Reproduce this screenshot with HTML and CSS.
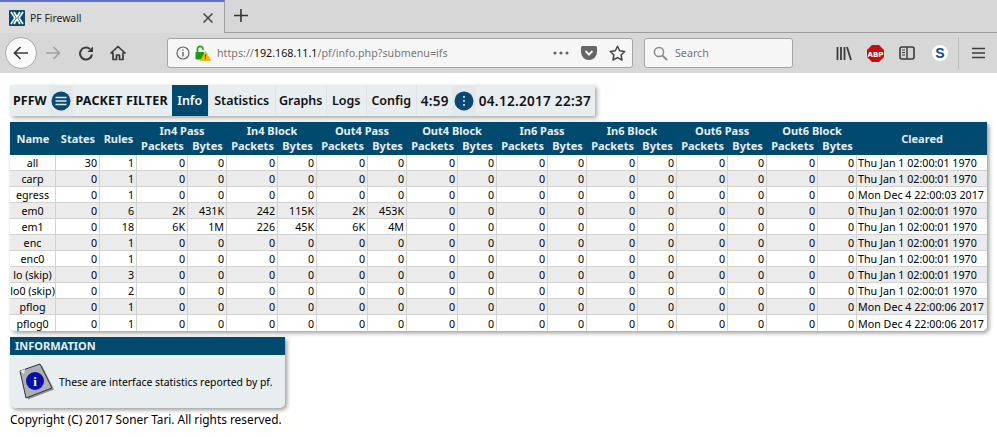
FILE: index.html
```html
<!DOCTYPE html>
<html lang="en">
<head>
<meta charset="utf-8">
<title>PF Firewall</title>
<link rel="stylesheet" href="styles.css">
</head>
<body>
<header class="browser">
  <div class="tabstrip">
    <div class="tab">
      <svg class="favicon" width="16" height="16" viewBox="0 0 16 16"><rect width="16" height="16" rx="1" fill="#0b4a70"/><path d="M2 2 6 8 2 14M14 2 10 8 14 14M5 2 8 7 11 2M5 14 8 9 11 14" stroke="#fff" stroke-width="1.6" fill="none"/></svg>
      <span class="tabtitle">PF Firewall</span>
      <svg class="tabclose" width="10" height="10" viewBox="0 0 10 10"><path d="M0.5 0.5 9.5 9.5M9.5 0.5 0.5 9.5" stroke="#444" stroke-width="1.5"/></svg>
    </div>
    <svg class="newtab" width="14" height="13" viewBox="0 0 14 13"><path d="M7 0V13M0 6.500H14" stroke="#333" stroke-width="1.6"/></svg>
  </div>
  <div class="navbar">
    <div class="backbtn"><svg width="16" height="14" viewBox="0 0 16 14"><path d="M15 7H2M7.500 1 1.500 7l6 6" stroke="#3b3b3b" stroke-width="1.7" fill="none"/></svg></div>
    <svg class="forward" width="16" height="14" viewBox="0 0 16 14"><path d="M1 7H14M8.500 1l6 6-6 6" stroke="#a0a0a0" stroke-width="1.7" fill="none"/></svg>
    <svg class="reload" width="16" height="15" viewBox="0 0 16 15"><path d="M14 8.500A6 6 0 1 1 12 3" stroke="#3b3b3b" stroke-width="2" fill="none"/><path d="M9.500 6H15V.5z" fill="#3b3b3b"/></svg>
    <svg class="home" width="16" height="16" viewBox="0 0 16 16"><path d="M8 1.500 1 8h2v6.500h3.500V10h3v4.500H13V8h2z" fill="none" stroke="#3b3b3b" stroke-width="1.7" stroke-linejoin="round"/></svg>
    <div class="urlbar">
      <svg class="infoi" width="14" height="14" viewBox="0 0 14 14"><circle cx="7" cy="7" r="6" fill="none" stroke="#666" stroke-width="1.2"/><path d="M7 6v4.500M7 3.500v1.300" stroke="#666" stroke-width="1.4"/></svg>
      <svg class="lock" width="16" height="16" viewBox="0 0 16 16"><path d="M2.500 7V4a2.700 2.700 0 0 1 5.400 0v1" fill="none" stroke="#1fa51f" stroke-width="1.7"/><rect x="0.5" y="7" width="8.500" height="7.500" rx="1" fill="#12a012"/><path d="M10.500 6.500 15.800 15.500H5.200z" fill="#f5b800" stroke="#d99a00" stroke-width=".5"/><path d="M10.500 9.500v3M10.500 13.200v1" stroke="#333" stroke-width="1"/></svg>
      <span class="url"><span class="urldim">https://</span><span class="urlhost">192.168.11.1</span><span class="urldim">/pf/info.php?submenu=ifs</span></span>
      <svg class="dots" width="16" height="4" viewBox="0 0 16 4"><circle cx="2" cy="2" r="1.600" fill="#666"/><circle cx="8" cy="2" r="1.600" fill="#666"/><circle cx="14" cy="2" r="1.600" fill="#666"/></svg>
      <svg class="pocket" width="16" height="14" viewBox="0 0 16 14"><path d="M1.500 0h13A1.500 1.500 0 0 1 16 1.500V6A8 8 0 0 1 0 6V1.500A1.500 1.500 0 0 1 1.500 0z" fill="#666"/><path d="M4.500 5 8 8.500 11.500 5" stroke="#f0f0f0" stroke-width="2" fill="none"/></svg>
      <svg class="star" width="17" height="16" viewBox="0 0 17 16"><path d="M8.500 1.200 10.700 5.800l5 .7-3.600 3.500.9 5-4.500-2.400L4 15l.9-5L1.300 6.500l5-.7z" fill="none" stroke="#444" stroke-width="1.5" stroke-linejoin="round"/></svg>
    </div>
    <div class="searchbar">
      <svg width="15" height="15" viewBox="0 0 15 15"><circle cx="6" cy="6" r="4.600" fill="none" stroke="#8a8a8a" stroke-width="1.500"/><path d="M9.500 9.500 14 14" stroke="#8a8a8a" stroke-width="1.800"/></svg>
      <span class="searchtext">Search</span>
    </div>
    <div class="tools">
      <svg width="16" height="15" viewBox="0 0 16 15"><path d="M1.500 1v13M5 1v13M8.500 1v13M11 1l4 13" stroke="#3b3b3b" stroke-width="1.800" fill="none"/></svg>
      <svg class="abp" width="17" height="17" viewBox="0 0 17 17"><path d="M5 0h7l5 5v7l-5 5H5l-5-5V5z" fill="#c70d0d"/><text x="8.500" y="11.500" class="abptext">ABP</text></svg>
      <svg width="16" height="14" viewBox="0 0 16 14"><rect x="1" y="1" width="14" height="12" rx="2" fill="none" stroke="#3b3b3b" stroke-width="1.600"/><path d="M8 1v12" stroke="#3b3b3b" stroke-width="1.400"/><path d="M3 4h3M3 6.500h3M3 9h3" stroke="#3b3b3b" stroke-width="1"/></svg>
      <span class="sbadge">S</span>
      <span class="toolsep"></span>
      <svg width="13" height="12" viewBox="0 0 13 12"><path d="M0 1.500H13M0 6H13M0 10.500H13" stroke="#3b3b3b" stroke-width="1.700"/></svg>
    </div>
  </div>
</header>
<main class="page">
  <nav class="menu">
    <span class="brand">PFFW</span>
    <span class="circlebox"><svg width="20" height="20" viewBox="0 0 20 20"><circle cx="10" cy="10" r="9.500" fill="#0a4a72"/><path d="M4.500 6.500h11M4.500 10h11M4.500 13.500h11" stroke="#dfe7ec" stroke-width="1.700"/></svg></span>
    <span class="brand brandname">PACKET FILTER</span>
    <a class="item item-info active">Info</a>
    <a class="item item-stats">Statistics</a>
    <a class="item item-graphs">Graphs</a>
    <a class="item item-logs">Logs</a>
    <a class="item item-config">Config</a>
    <span class="clock clock-first">4:59</span>
    <span class="circlebox"><svg width="20" height="20" viewBox="0 0 20 20"><circle cx="10" cy="10" r="9.500" fill="#0a4a72"/><path d="M10 5v1.800M10 9v1.800M10 13v1.800" stroke="#dfe7ec" stroke-width="1.800"/></svg></span>
    <span class="clock">04.12.2017 22:37</span>
  </nav>
  <table class="stats">
    <colgroup>
      <col class="c-name"><col class="c-states"><col class="c-rules">
      <col class="c-p"><col class="c-b"><col class="c-p"><col class="c-b">
      <col class="c-p"><col class="c-b"><col class="c-p"><col class="c-b">
      <col class="c-p"><col class="c-b"><col class="c-p"><col class="c-b">
      <col class="c-p"><col class="c-b"><col class="c-p"><col class="c-b">
      <col class="c-cleared">
    </colgroup>
    <thead>
      <tr><th rowspan="2">Name</th><th rowspan="2">States</th><th rowspan="2">Rules</th><th colspan="2">In4 Pass</th><th colspan="2">In4 Block</th><th colspan="2">Out4 Pass</th><th colspan="2">Out4 Block</th><th colspan="2">In6 Pass</th><th colspan="2">In6 Block</th><th colspan="2">Out6 Pass</th><th colspan="2">Out6 Block</th><th rowspan="2">Cleared</th></tr>
      <tr><th>Packets</th><th>Bytes</th><th>Packets</th><th>Bytes</th><th>Packets</th><th>Bytes</th><th>Packets</th><th>Bytes</th><th>Packets</th><th>Bytes</th><th>Packets</th><th>Bytes</th><th>Packets</th><th>Bytes</th><th>Packets</th><th>Bytes</th></tr>
    </thead>
    <tbody>
      <tr><td class="nm">all</td><td>30</td><td>1</td><td>0</td><td>0</td><td>0</td><td>0</td><td>0</td><td>0</td><td>0</td><td>0</td><td>0</td><td>0</td><td>0</td><td>0</td><td>0</td><td>0</td><td>0</td><td>0</td><td class="dt">Thu Jan 1 02:00:01 1970</td></tr>
      <tr><td class="nm">carp</td><td>0</td><td>1</td><td>0</td><td>0</td><td>0</td><td>0</td><td>0</td><td>0</td><td>0</td><td>0</td><td>0</td><td>0</td><td>0</td><td>0</td><td>0</td><td>0</td><td>0</td><td>0</td><td class="dt">Thu Jan 1 02:00:01 1970</td></tr>
      <tr><td class="nm">egress</td><td>0</td><td>1</td><td>0</td><td>0</td><td>0</td><td>0</td><td>0</td><td>0</td><td>0</td><td>0</td><td>0</td><td>0</td><td>0</td><td>0</td><td>0</td><td>0</td><td>0</td><td>0</td><td class="dt">Mon Dec 4 22:00:03 2017</td></tr>
      <tr><td class="nm">em0</td><td>0</td><td>6</td><td>2K</td><td>431K</td><td>242</td><td>115K</td><td>2K</td><td>453K</td><td>0</td><td>0</td><td>0</td><td>0</td><td>0</td><td>0</td><td>0</td><td>0</td><td>0</td><td>0</td><td class="dt">Thu Jan 1 02:00:01 1970</td></tr>
      <tr><td class="nm">em1</td><td>0</td><td>18</td><td>6K</td><td>1M</td><td>226</td><td>45K</td><td>6K</td><td>4M</td><td>0</td><td>0</td><td>0</td><td>0</td><td>0</td><td>0</td><td>0</td><td>0</td><td>0</td><td>0</td><td class="dt">Thu Jan 1 02:00:01 1970</td></tr>
      <tr><td class="nm">enc</td><td>0</td><td>1</td><td>0</td><td>0</td><td>0</td><td>0</td><td>0</td><td>0</td><td>0</td><td>0</td><td>0</td><td>0</td><td>0</td><td>0</td><td>0</td><td>0</td><td>0</td><td>0</td><td class="dt">Thu Jan 1 02:00:01 1970</td></tr>
      <tr><td class="nm">enc0</td><td>0</td><td>1</td><td>0</td><td>0</td><td>0</td><td>0</td><td>0</td><td>0</td><td>0</td><td>0</td><td>0</td><td>0</td><td>0</td><td>0</td><td>0</td><td>0</td><td>0</td><td>0</td><td class="dt">Thu Jan 1 02:00:01 1970</td></tr>
      <tr><td class="nm">lo (skip)</td><td>0</td><td>3</td><td>0</td><td>0</td><td>0</td><td>0</td><td>0</td><td>0</td><td>0</td><td>0</td><td>0</td><td>0</td><td>0</td><td>0</td><td>0</td><td>0</td><td>0</td><td>0</td><td class="dt">Thu Jan 1 02:00:01 1970</td></tr>
      <tr><td class="nm">lo0 (skip)</td><td>0</td><td>2</td><td>0</td><td>0</td><td>0</td><td>0</td><td>0</td><td>0</td><td>0</td><td>0</td><td>0</td><td>0</td><td>0</td><td>0</td><td>0</td><td>0</td><td>0</td><td>0</td><td class="dt">Thu Jan 1 02:00:01 1970</td></tr>
      <tr><td class="nm">pflog</td><td>0</td><td>1</td><td>0</td><td>0</td><td>0</td><td>0</td><td>0</td><td>0</td><td>0</td><td>0</td><td>0</td><td>0</td><td>0</td><td>0</td><td>0</td><td>0</td><td>0</td><td>0</td><td class="dt">Mon Dec 4 22:00:06 2017</td></tr>
      <tr><td class="nm">pflog0</td><td>0</td><td>1</td><td>0</td><td>0</td><td>0</td><td>0</td><td>0</td><td>0</td><td>0</td><td>0</td><td>0</td><td>0</td><td>0</td><td>0</td><td>0</td><td>0</td><td>0</td><td>0</td><td class="dt">Mon Dec 4 22:00:06 2017</td></tr>
    </tbody>
  </table>
  <section class="info">
    <h2 class="infohead">INFORMATION</h2>
    <div class="infobody">
      <svg class="infoicon" width="36" height="38" viewBox="0 0 36 38"><path d="M1 8 21 1 33 25 7 35z" fill="#222" opacity=".45" transform="translate(2 1.500)"/><path d="M1 8 21 1 33 25 7 35z" fill="#aab0b6" stroke="#333" stroke-width="1"/><path d="M1 8 6 6 5 11z" fill="#e8e8e8"/><circle cx="16" cy="18" r="9" fill="#0a0fa8"/><text x="16" y="23" class="infoglyph">i</text></svg>
      <span class="infotext">These are interface statistics reported by pf.</span>
    </div>
  </section>
  <footer class="copy">Copyright (C) 2017 Soner Tari. All rights reserved.</footer>
</main>
</body>
</html>
```
FILE: styles.css
```css
* { box-sizing: border-box; }
html, body { margin: 0; padding: 0; height: 100%; overflow: hidden; background: #fff; }
body { font-family: "Noto Sans", "DejaVu Sans", sans-serif; font-size: 11px; color: #000; }

.browser { background: #d7d7d7; height: 73px; }
.tabstrip { height: 33px; display: flex; align-items: stretch; border-bottom: 1px solid #9e9e9e; }
.tab { width: 225px; height: 33px; background: #dcdcdc; border-top: 2px solid #5b73c8; border-right: 1px solid #a0a0a0; display: flex; align-items: center; padding: 0 11px 0 9px; }
.favicon { flex: none; }
.tabtitle { margin-left: 5px; font-size: 10.400px; color: #222; flex: 1; }
.newtab { margin: 9px 0 0 9px; }
.navbar { height: 40px; display: flex; align-items: center; padding: 0 0 0 5px; }
.backbtn { width: 32px; height: 32px; border-radius: 50%; background: #fafafa; border: 1px solid #a8a8a8; display: flex; align-items: center; justify-content: center; }
.forward { margin-left: 8px; }
.reload { margin-left: 17px; }
.home { margin-left: 16px; }
.urlbar { margin-left: 41px; width: 466px; height: 30px; background: #f6f6f6; border: 1px solid #a4a4a4; border-radius: 3px; display: flex; align-items: center; padding: 0 6px 0 8px; }
.lock { margin-left: 5px; }
.url { margin-left: 6px; flex: 1; font-size: 10.700px; white-space: nowrap; }
.urldim { color: #777; }
.urlhost { color: #111; }
.pocket { margin-left: 12px; }
.star { margin-left: 12px; }
.dots { flex: none; }
.searchbar { margin-left: 11px; width: 149px; height: 30px; background: #f6f6f6; border: 1px solid #a4a4a4; border-radius: 3px; display: flex; align-items: center; padding-left: 8px; }
.searchtext { margin-left: 7px; color: #777; font-size: 10.700px; }
.tools { margin-left: 43px; display: flex; align-items: center; gap: 15px; }
.abptext { font: bold 7px "DejaVu Sans", sans-serif; fill: #fff; text-anchor: middle; }
.sbadge { width: 16px; height: 16px; margin-left: 2px; border-radius: 50%; background: #fff; color: #0c479c; font: bold 14px/16px "Liberation Sans", sans-serif; text-align: center; }
.toolsep { width: 1px; height: 32px; background: #bcbcbc; margin: 0 -2px 0 -5px; }

.page { padding: 12px 10px 0; display: flex; flex-direction: column; align-items: flex-start; }

.menu { display: flex; align-items: stretch; height: 31px; padding-right: 1px; background: #e8edf0; box-shadow: 2px 2px 4px rgba(0,0,0,.35); font-size: 12.500px; font-weight: 600; color: #111; white-space: nowrap; border-radius: 2px 0 0 2px; }
.brand { display: flex; align-items: center; padding: 0 2px 0 3px; font-weight: 700; }
.brandname { padding: 0 4px 0 3px; letter-spacing: .15px; }
.circlebox { display: flex; align-items: center; padding: 0 2px; background: #e2e8ec; }
.item { display: flex; align-items: center; justify-content: center; border-left: 1px solid #dde3e7; }
.item-info { width: 36px; }
.item-stats { width: 67px; }
.item-graphs { width: 51px; }
.item-logs { width: 40px; }
.item-config { width: 50px; }
.active { background: #004a70; color: #fff; border-left: 0; }
.clock { display: flex; align-items: center; padding: 0 3px; font-size: 13.500px; letter-spacing: .3px; }
.clock-first { padding-left: 4px; border-left: 1px solid #dde3e7; }

.stats { margin-top: 6px; width: 977px; table-layout: fixed; border-collapse: separate; border-spacing: 0; box-shadow: 2px 2px 4px rgba(0,0,0,.4); border-radius: 0 0 5px 5px; }
.c-name { width: 46px; }
.c-states { width: 44px; }
.c-rules { width: 37px; }
.c-p { width: 51px; }
.c-b { width: 39px; }
.c-cleared { width: 130px; }
.stats th { background: #004a70; color: #e8eef2; font-weight: 700; font-size: 11px; line-height: 16px; padding: 0; text-align: center; white-space: nowrap; }
.stats thead tr:first-child th[colspan] { height: 16px; line-height: 15px; padding-top: 1px; }
.stats thead tr:last-child th { height: 17px; padding-bottom: 1px; }
.stats td { height: 16px; padding: 1px 2px 0 0; font-size: 10.700px; line-height: 14px; text-align: right; border-right: 1px solid #d2d2d2; border-bottom: 1px solid #d2d2d2; background: #fff; white-space: nowrap; }
.stats tbody tr:nth-child(even) td { background: #ebebeb; }
.stats td.nm { text-align: center; padding: 1px 0 0; }
.stats td.dt { text-align: left; padding: 1px 0 0 1px; border-right: 0; }
.stats tbody tr:last-child td { border-bottom: 0; }
.stats tbody tr:last-child td:first-child { border-bottom-left-radius: 5px; }
.stats tbody tr:last-child td:last-child { border-bottom-right-radius: 5px; }

.info { margin-top: 6px; width: 275px; background: #e8edf0; box-shadow: 2px 2px 4px rgba(0,0,0,.4); border-radius: 0 0 5px 5px; }
.infohead { margin: 0; height: 18px; background: #004a70; color: #e8eef2; font-size: 11px; font-weight: 700; line-height: 18px; padding-left: 5px; }
.infobody { height: 53px; display: flex; align-items: center; padding-left: 9px; }
.infoicon { flex: none; }
.infotext { margin-left: 4px; font-size: 10.400px; }
.infoglyph { font: bold 13px "Liberation Serif", serif; fill: #fff; text-anchor: middle; }
.copy { margin-top: 3px; font-size: 11.850px; line-height: 17px; }
```
